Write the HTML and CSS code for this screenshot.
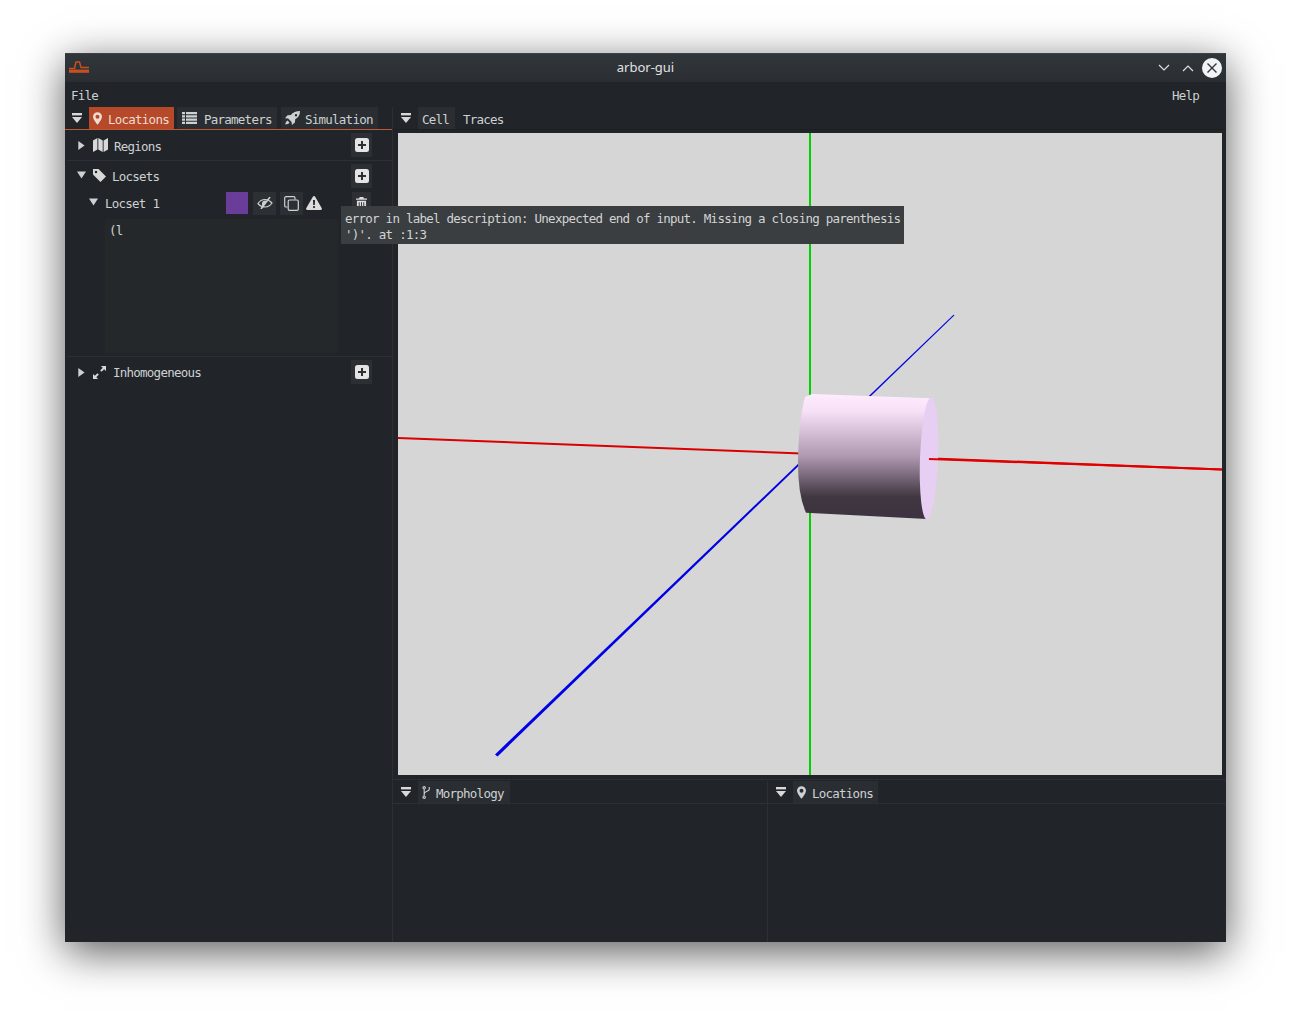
FILE: index.html
```html
<!DOCTYPE html>
<html>
<head>
    <title>arbor-gui</title>
    <link rel="stylesheet" href="styles.css">
</head>
<body>
    <!-- shared icons -->
    <svg class="defs">
        <symbol id="i-dock" viewBox="0 0 10 10"><rect width="10" height="2.4"/><polygon points="0,4 10,4 5,10"/></symbol>
        <symbol id="i-pin" viewBox="0 0 10 14"><path fill-rule="evenodd" d="M5 0a5 5 0 0 0-5 5c0 3 5 9 5 9s5-6 5-9a5 5 0 0 0-5-5zm0 2.8a2.2 2.2 0 1 1 0 4.4 2.2 2.2 0 0 1 0-4.4z"/></symbol>
        <symbol id="i-plus" viewBox="0 0 14 14"><path fill-rule="evenodd" d="M2.5 0h9A2.5 2.5 0 0 1 14 2.500v9a2.500 2.500 0 0 1-2.500 2.500h-9A2.500 2.500 0 0 1 0 11.500v-9A2.500 2.500 0 0 1 2.500 0zM6 3v3H3v2h3v3h2V8h3V6H8V3z"/></symbol>
        <symbol id="i-right" viewBox="0 0 8 10"><polygon points="1,0 8,5 1,10"/></symbol>
        <symbol id="i-down" viewBox="0 0 10 8"><polygon points="0,0 10,0 5,8"/></symbol>
    </svg>

    <div class="window">
        <div class="titlebar">
            <svg class="logo" viewBox="0 0 20 12" width="20" height="12">
                <path d="M0 7.500h5.500L7 1h3.500l1.500 5.500h8" fill="none" stroke="#c8501e" stroke-width="1.500"/>
                <rect y="8.600" width="20" height="3.200" fill="#c8501e"/>
            </svg>
            <span class="title">arbor-gui</span>
            <div class="controls">
                <svg width="12" height="8" viewBox="0 0 12 8"><path d="M1 1l5 5 5-5" fill="none" stroke="#e0e2e4" stroke-width="1.200"/></svg>
                <svg width="12" height="8" viewBox="0 0 12 8"><path d="M1 7l5-5 5 5" fill="none" stroke="#e0e2e4" stroke-width="1.200"/></svg>
                <svg class="close" width="20" height="20" viewBox="0 0 20 20"><circle cx="10" cy="10" r="10" fill="#f2f3f4"/><path d="M5.500 5.500l9 9M14.500 5.500l-9 9" stroke="#31363b" stroke-width="1.400"/></svg>
            </div>
        </div>

        <div class="menubar">
            <span>File</span>
            <span class="help">Help</span>
        </div>

        <div class="dock">
            <div class="left">
                <div class="tabbar active-line">
                    <svg class="dock-btn"><use href="#i-dock"/></svg>
                    <div class="tab active w-loc">
                        <svg class="ic-pin"><use href="#i-pin"/></svg>
                        <span>Locations</span>
                    </div>
                    <div class="tab w-par">
                        <svg class="ic" viewBox="0 0 15 12"><path d="M0 0h3v2.200H0zM4 0h11v2.200H4zM0 3.300h3v2.200H0zM4 3.300h11v2.200H4zM0 6.600h3v2.200H0zM4 6.600h11v2.200H4zM0 9.800h3V12H0zM4 9.800h11V12H4z"/></svg>
                        <span>Parameters</span>
                    </div>
                    <div class="tab w-sim">
                        <svg class="ic" viewBox="0 0 15 14"><path d="M15 0c-4 0-7 1.200-9.200 4L2.500 4.300 0 7.300l3.200.3 3.400 3.400.3 3 3-2.500.3-3.300C13.500 6.500 15 4 15 0zM11 3a1.200 1.200 0 1 1 0 2.400A1.200 1.200 0 0 1 11 3zM2.500 9.500C1 10 .5 12 .3 13.500 2 13.300 3.800 13 4.500 11.500z"/></svg>
                        <span>Simulation</span>
                    </div>
                </div>

                <div class="section">
                    <div class="row">
                        <svg class="arrow-r"><use href="#i-right"/></svg>
                        <svg class="ic-map" viewBox="0 0 15 14"><path d="M0 2.500L4.400 0v11.500L0 14zM5.300 0l4.400 2.500V14l-4.400-2.500zM10.600 2.500L15 0v11.500L10.600 14z"/></svg>
                        <span class="label">Regions</span>
                        <div class="add"><svg class="ic-plus"><use href="#i-plus"/></svg></div>
                    </div>
                </div>

                <div class="section open">
                    <div class="row">
                        <svg class="arrow-d"><use href="#i-down"/></svg>
                        <svg class="ic-tag" viewBox="0 0 13 13"><path fill-rule="evenodd" d="M0 0h5.500L13 7.500 7.500 13 0 5.500zM3 1.800a1.200 1.200 0 1 0 0 2.400 1.200 1.200 0 0 0 0-2.400z"/></svg>
                        <span class="label">Locsets</span>
                        <div class="add"><svg class="ic-plus"><use href="#i-plus"/></svg></div>
                    </div>
                    <div class="row locset">
                        <svg class="arrow-d"><use href="#i-down"/></svg>
                        <span class="name">Locset 1</span>
                        <div class="swatch"></div>
                        <div class="tool">
                            <svg class="ic-eye" viewBox="0 0 16 12"><path d="M1 6.500c1.800-2.700 4-4 7-4 2.800 0 5 1.300 7 3.500-1.800 2.700-4 4-7 4-2.800 0-5.200-1.300-7-3.500z" fill="none" stroke="currentColor" stroke-width="1.200"/><path d="M5 6.500a3 3 0 0 1 4.500-2.600L6 9.500a3 3 0 0 1-1-3z"/><path d="M13 0L4 12" stroke="currentColor" stroke-width="1.500"/></svg>
                        </div>
                        <div class="tool">
                            <svg class="ic-copy" viewBox="0 0 15 15"><path d="M3.500 11H2a1.300 1.300 0 0 1-1.300-1.300V2A1.300 1.300 0 0 1 2 .7h7.700A1.300 1.300 0 0 1 11 2v1.500" fill="none" stroke="currentColor" stroke-width="1.200"/><rect x="4.200" y="4" width="10.100" height="10.300" rx="1.300" fill="none" stroke="currentColor" stroke-width="1.200"/></svg>
                        </div>
                        <svg class="ic-warn" viewBox="0 0 16 14"><path fill-rule="evenodd" d="M8 0c.5 0 .8.200 1 .600l6.800 11.600c.4.800-.1 1.800-1 1.800H1.200c-.9 0-1.400-1-1-1.800L7 .600C7.200.200 7.500 0 8 0zM7 4l.2 5h1.600L9 4zm1 6a1.100 1.100 0 1 0 0 2.200A1.100 1.100 0 0 0 8 10z"/></svg>
                        <div class="tool trash">
                            <svg class="ic-trash" viewBox="0 0 12 14"><path fill-rule="evenodd" d="M4 0h4l.6 1.500H12V3H0V1.500h3.400zM1 4h10v8.500c0 .8-.7 1.500-1.500 1.500h-7C1.700 14 1 13.300 1 12.500zm2 1.500V12.500h1V5.500zm2.500 0V12.500h1V5.500zm2.500 0V12.500h1V5.500z"/></svg>
                        </div>
                    </div>
                    <div class="editor">(l</div>
                </div>

                <div class="section last">
                    <div class="row">
                        <svg class="arrow-r"><use href="#i-right"/></svg>
                        <svg class="ic-expand" viewBox="0 0 14 14"><path d="M8.500 0H14v5.500l-2-2-2.800 2.800-1.500-1.500L10.500 2zM5.500 14H0V8.500l2 2 2.800-2.800 1.500 1.500L3.500 12z"/></svg>
                        <span class="label">Inhomogeneous</span>
                        <div class="add"><svg class="ic-plus"><use href="#i-plus"/></svg></div>
                    </div>
                </div>
            </div>

            <div class="right">
                <div class="tabbar main">
                    <svg class="dock-btn"><use href="#i-dock"/></svg>
                    <div class="tab w-cell"><span>Cell</span></div>
                    <span class="plain">Traces</span>
                </div>

                <div class="viewport">
                    <svg class="scene" viewBox="0 0 824 642" width="824" height="642">
                        <defs>
                            <linearGradient id="shade" x1="0" y1="0" x2="0" y2="1">
                                <stop offset="0" stop-color="#ffecff"/>
                                <stop offset=".14" stop-color="#f6e0f6"/>
                                <stop offset=".5" stop-color="#ae98b0"/>
                                <stop offset=".82" stop-color="#413742"/>
                                <stop offset="1" stop-color="#3d3340"/>
                            </linearGradient>
                        </defs>
                        <line x1="412" y1="0" x2="412" y2="642" stroke="#00d000" stroke-width="2"/>
                        <line x1="0" y1="305" x2="824" y2="336.500" stroke="#d80000" stroke-width="2"/>
                        <polygon points="97,621.500 99.500,623.500 556.500,182.300 555.500,181.700" fill="#0000e6"/>
                        <path d="M414 261L533 265.300L529 386L408 379.800Q400 362 400 330Q400.500 288 407 264Z" fill="url(#shade)"/>
                        <ellipse cx="531" cy="325.500" rx="9" ry="61" transform="rotate(2 531 325.500)" fill="#e6cff2"/>
                        <line x1="531" y1="326" x2="824" y2="336.500" stroke="#e00000" stroke-width="2"/>
                    </svg>
                </div>

                <div class="bottom">
                    <div class="pane morph">
                        <div class="tabbar">
                            <svg class="dock-btn"><use href="#i-dock"/></svg>
                            <div class="tab w-morph">
                                <svg class="ic-branch" viewBox="0 0 9 14"><g fill="none" stroke="currentColor" stroke-width="1.200"><circle cx="2" cy="2" r="1.300"/><circle cx="2" cy="12" r="1.300"/><path d="M2 3.500v7M7.500 1v2.500c0 2.500-5.500 2-5.500 5"/></g></svg>
                                <span>Morphology</span>
                            </div>
                        </div>
                    </div>
                    <div class="pane">
                        <div class="tabbar">
                            <svg class="dock-btn"><use href="#i-dock"/></svg>
                            <div class="tab w-loc2">
                                <svg class="ic-pin"><use href="#i-pin"/></svg>
                                <span>Locations</span>
                            </div>
                        </div>
                    </div>
                </div>
            </div>
        </div>

        <div class="tooltip">error in label description: Unexpected end of input. Missing a closing parenthesis
')'. at :1:3</div>
    </div>
</body>
</html>
```

FILE: styles.css
```css
/* arbor-gui window on a white desktop */
html, body {
    margin: 0;
    height: 100%;
    background-color: #fff;
}
body {
    padding: 53px 65px 0;
    box-sizing: border-box;
    font-family: "DejaVu Sans Mono", monospace;
    font-size: 12.500px;
    letter-spacing: -0.755px;
    color: #ced1d2;
    overflow: hidden;
}
svg {
    display: block;
    flex: none;
    fill: currentColor;
}
.defs {
    display: none;
}
.window {
    position: relative;
    display: flex;
    flex-direction: column;
    width: 1161px;
    height: 889px;
    background-color: #212529;
    box-shadow: 0 10px 40px rgba(0, 0, 0, 0.65);
}

/* title bar */
.titlebar {
    display: grid;
    grid-template-columns: 1fr auto 1fr;
    align-items: center;
    height: 29px;
    padding: 0 4px;
    background: linear-gradient(#31363b, #2a2e33);
    border-top: 1px solid #3d4248;
    box-sizing: border-box;
    font-family: "Noto Sans", sans-serif;
    font-size: 13px;
    letter-spacing: 0;
    color: #e0e2e4;
}
.logo {
    margin-top: -3px;
}
.title {
    margin-top: -2px;
}
.controls {
    display: flex;
    align-items: center;
    justify-content: flex-end;
    gap: 12px;
    margin-top: -1px;
}
.close {
    margin-left: -4px;
}

/* menu */
.menubar {
    display: flex;
    justify-content: space-between;
    height: 25px;
    padding: 6px 27px 0 6px;
    box-sizing: border-box;
    line-height: 16px;
}

/* dock */
.dock {
    display: flex;
    flex: 1;
    min-height: 0;
}
.left {
    width: 327px;
    border-right: 1px solid #2c3035;
}
.right {
    display: flex;
    flex-direction: column;
    flex: 1;
    min-width: 0;
}
.tabbar {
    display: flex;
    align-items: flex-end;
    height: 23px;
    box-sizing: border-box;
    border-bottom: 1px solid #2c3035;
}
.tabbar.active-line {
    border-bottom-color: #bd5a33;
}
.tabbar.main {
    border-bottom-color: #1c1f22;
}
.dock-btn {
    width: 10px;
    height: 10px;
    margin: 0 7px 6px 7px;
    color: #d8d8d8;
}
.right .dock-btn {
    margin-left: 8px;
    margin-right: 6px;
}
.tab {
    display: flex;
    align-items: center;
    height: 22px;
    box-sizing: border-box;
    background-color: #2a2e32;
    margin-right: 4px;
    line-height: 22px;
}
.tab.active {
    background-color: #b5492a;
    color: #eedcd2;
}
.tab span, .plain {
    position: relative;
    top: 1.500px;
}
.w-loc { width: 85px; padding-left: 4px; gap: 6px; margin-right: 3px; }
.w-par { width: 100px; padding-left: 5px; gap: 7px; }
.w-sim { width: 97px; padding-left: 4px; gap: 5px; }
.w-cell { width: 37px; padding-left: 4px; margin-left: 1px; margin-right: 8px; }
.w-morph { width: 92px; padding-left: 4px; gap: 5px; margin-left: 1px; }
.w-loc2 { width: 85px; padding-left: 4px; gap: 6px; margin-left: 1px; }
.plain {
    line-height: 22px;
}
.ic { width: 15px; height: 14px; }
.ic-pin { width: 9px; height: 13px; }
.ic-branch { width: 9px; height: 13px; }

/* tree */
.section {
    padding: 3px 20px 3px 0;
}
.section.open, .section.last {
    border-top: 1px solid #2c3035;
    margin-left: 2px;
}
.section.open {
    height: 196px;
    box-sizing: border-box;
}
.row {
    display: flex;
    align-items: center;
    height: 24px;
    padding-left: 12px;
}
.section.open > .row:first-child, .section.last > .row {
    padding-left: 10px;
}
.label {
    flex: 1;
    position: relative;
    top: 1px;
}
.section.open .label, .section.last .label {
    top: 0;
}
.arrow-r { width: 8px; height: 9px; margin-right: 8px; }
.arrow-d { width: 9px; height: 8px; margin-right: 7px; margin-top: -3px; }
.ic-map { width: 15px; height: 14px; margin-right: 6px; color: #d8d8d8; }
.ic-tag { width: 13px; height: 13px; margin-right: 6px; margin-top: -2px; color: #d8d8d8; }
.ic-expand { width: 13px; height: 13px; margin-right: 7px; color: #d8d8d8; }
.add {
    display: flex;
    align-items: center;
    justify-content: center;
    width: 21px;
    height: 24px;
    background-color: #2c3035;
}
.ic-plus { width: 14px; height: 14px; color: #e4e4e4; }

.locset {
    margin-top: 3px;
    padding-left: 22px !important;
}
.name {
    width: 121px;
}
.swatch {
    width: 22px;
    height: 22px;
    background-color: #6a3d9a;
    margin-right: 5px;
}
.tool {
    display: flex;
    align-items: center;
    justify-content: center;
    width: 23px;
    height: 23px;
    margin-right: 4px;
    background-color: #2c3035;
}
.tool.trash {
    width: 19px;
    margin: 0 0 0 30px;
}
.ic-eye { width: 16px; height: 12px; color: #cfd2d3; }
.ic-copy { width: 15px; height: 15px; color: #cfd2d3; }
.ic-warn { width: 16px; height: 14px; color: #dcdcdc; margin-left: -1px; }
.ic-trash { width: 11px; height: 13px; color: #dcdcdc; }
.editor {
    width: 233px;
    height: 134px;
    margin: 4px 0 0 38px;
    padding: 4px;
    box-sizing: border-box;
    background-color: #25282b;
    line-height: 16px;
}

/* viewport */
.viewport {
    flex: none;
    height: 642px;
    margin: 3px 4px 4px 5px;
    background-color: #d6d6d6;
}

/* bottom panes */
.bottom {
    display: flex;
    flex: 1;
    border-top: 1px solid #2c3035;
    padding-top: 1px;
}
.pane {
    flex: 1;
}
.pane.morph {
    flex: none;
    width: 374px;
    border-right: 1px solid #2c3035;
}

.tooltip {
    position: absolute;
    left: 276px;
    top: 153px;
    width: 563px;
    height: 38px;
    padding: 5px 4px 0;
    box-sizing: border-box;
    background-color: #3a3e40;
    line-height: 16px;
    white-space: pre;
    color: #d2d4d5;
}
```
